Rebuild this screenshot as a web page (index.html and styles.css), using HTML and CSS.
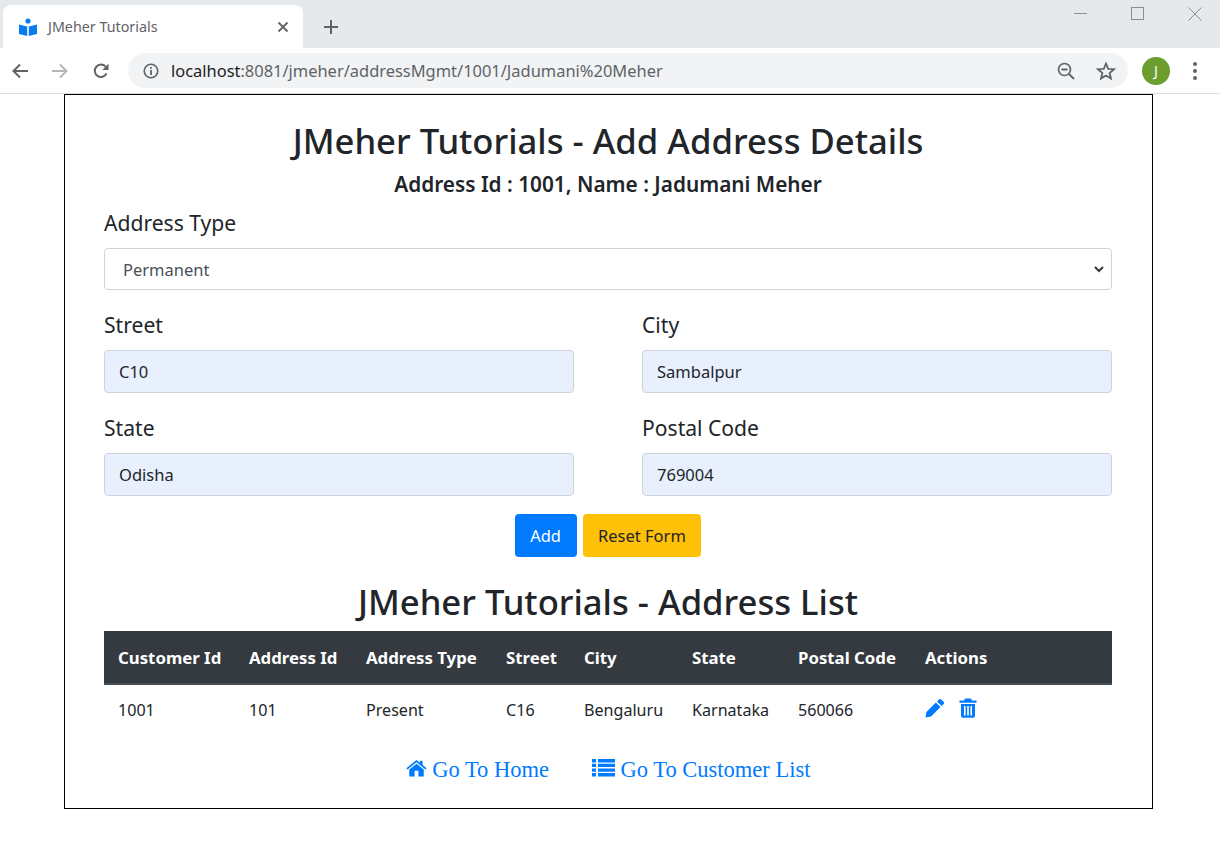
FILE: index.html
```html
<!DOCTYPE html>
<html lang="en">
<head>
  <meta charset="UTF-8" />
  <title>JMeher Tutorials</title>
  <link rel="stylesheet" href="styles.css">
</head>
<body>

  <header class="browser">
    <div class="tabStrip">
      <div class="tab">
        <svg class="favicon" viewBox="0 0 18 18" width="18" height="18">
          <circle cx="9" cy="3" r="2.6" fill="#0a7cf0" />
          <path d="M0 6.5 L8.2 8.6 V18 L0 16 Z M18 6.5 L9.8 8.6 V18 L18 16 Z" fill="#0a7cf0" />
        </svg>
        <span class="tabTitle">JMeher Tutorials</span>
        <svg class="tabClose" viewBox="0 0 12 12" width="12" height="12">
          <path d="M1.5 1.5 L10.5 10.5 M10.5 1.5 L1.5 10.5" stroke="#5f6368" stroke-width="1.8" />
        </svg>
      </div>
      <svg class="newTab" viewBox="0 0 16 16" width="16" height="16">
        <path d="M8 1 V15 M1 8 H15" stroke="#5f6368" stroke-width="2" />
      </svg>
      <div class="windowBtns">
        <svg viewBox="0 0 14 14" width="14" height="14"><path d="M0 6.5 H13" stroke="#8a8d91" stroke-width="1" /></svg>
        <svg viewBox="0 0 14 14" width="14" height="14"><rect x="0.5" y="0.5" width="12" height="12" fill="none" stroke="#8a8d91" /></svg>
        <svg viewBox="0 0 14 14" width="14" height="14"><path d="M0.5 0.5 L13.5 13.5 M13.5 0.5 L0.5 13.5" stroke="#8a8d91" stroke-width="1" /></svg>
      </div>
    </div>
    <div class="toolbar">
      <svg class="navIcon" viewBox="0 0 16 16" width="16" height="16">
        <path d="M16 8 H2 M8 1.5 L1.5 8 L8 14.5" fill="none" stroke="#5f6368" stroke-width="2" />
      </svg>
      <svg class="navIcon" viewBox="0 0 16 16" width="16" height="16">
        <path d="M0 8 H14 M8 1.5 L14.5 8 L8 14.5" fill="none" stroke="#b4b6b9" stroke-width="2" />
      </svg>
      <svg class="navIcon" viewBox="0 0 16 16" width="16" height="16">
        <path d="M13.6 10.4 A6.2 6.2 0 1 1 12.6 3.6" fill="none" stroke="#5f6368" stroke-width="2" />
        <path d="M15.5 0.8 V7 H9.3 Z" fill="#5f6368" />
      </svg>
      <div class="omnibox">
        <svg class="infoIcon" viewBox="0 0 16 16" width="16" height="16">
          <circle cx="8" cy="8" r="6.8" fill="none" stroke="#5f6368" stroke-width="1.6" />
          <path d="M8 7 V12 M8 4 V5.8" stroke="#5f6368" stroke-width="1.8" />
        </svg>
        <span class="url"><span class="urlHost">localhost</span>:8081/jmeher/addressMgmt/1001/Jadumani%20Meher</span>
        <svg class="zoomIcon" viewBox="0 0 18 18" width="18" height="18">
          <circle cx="7.5" cy="7.5" r="6" fill="none" stroke="#5f6368" stroke-width="1.7" />
          <path d="M4.5 7.5 H10.5 M12 12 L17 17" stroke="#5f6368" stroke-width="1.8" />
        </svg>
        <svg class="starIcon" viewBox="0 0 20 20" width="20" height="20">
          <path d="M10 2.5 L12.2 7.8 L18 8.2 L13.6 12 L15 17.6 L10 14.6 L5 17.6 L6.4 12 L2 8.2 L7.8 7.8 Z" fill="none" stroke="#5f6368" stroke-width="1.8" />
        </svg>
      </div>
      <div class="avatar">J</div>
      <div class="menuDots"><i></i><i></i><i></i></div>
    </div>
  </header>

  <main class="page">
    <h1>JMeher Tutorials - Add Address Details</h1>
    <h5>Address Id : 1001, Name : Jadumani Meher</h5>

    <form class="addressForm">
      <div class="field">
        <label for="addressType">Address Type</label>
        <div class="selectWrap">
          <select id="addressType">
            <option>Permanent</option>
            <option>Present</option>
          </select>
          <svg class="chevron" viewBox="0 0 10 8" width="10" height="8">
            <path d="M1 2 L5 6 L9 2" fill="none" stroke="#343a40" stroke-width="2" />
          </svg>
        </div>
      </div>
      <div class="fieldRow">
        <div class="field">
          <label for="street">Street</label>
          <input type="text" id="street" value="C10" />
        </div>
        <div class="field">
          <label for="city">City</label>
          <input type="text" id="city" value="Sambalpur" />
        </div>
      </div>
      <div class="fieldRow">
        <div class="field">
          <label for="state">State</label>
          <input type="text" id="state" value="Odisha" />
        </div>
        <div class="field">
          <label for="postalCode">Postal Code</label>
          <input type="text" id="postalCode" value="769004" />
        </div>
      </div>
      <div class="formButtons">
        <button type="button" class="btnAdd">Add</button>
        <button type="button" class="btnReset">Reset Form</button>
      </div>
    </form>

    <h2>JMeher Tutorials - Address List</h2>
    <table class="addressTable">
      <thead>
        <tr>
          <th class="colCustomer">Customer Id</th>
          <th class="colAddress">Address Id</th>
          <th class="colType">Address Type</th>
          <th class="colStreet">Street</th>
          <th class="colCity">City</th>
          <th class="colState">State</th>
          <th class="colPostal">Postal Code</th>
          <th>Actions</th>
        </tr>
      </thead>
      <tbody>
        <tr>
          <td>1001</td>
          <td>101</td>
          <td>Present</td>
          <td>C16</td>
          <td>Bengaluru</td>
          <td>Karnataka</td>
          <td>560066</td>
          <td class="actions">
            <a href="#" aria-label="Edit">
              <svg viewBox="0 0 20 20" width="20" height="20">
                <path d="M14.2 1.2 Q15 0.4 15.9 1.2 L18.8 4.1 Q19.6 5 18.8 5.8 L16.6 8 L12 3.4 Z M10.9 4.5 L15.5 9.1 L6 18.6 L0.6 19.6 L1.4 14 Z" fill="#007bff" />
              </svg>
            </a>
            <a href="#" aria-label="Delete">
              <svg viewBox="0 0 18 20" width="18" height="20">
                <path fill-rule="evenodd" d="M6 0.5 H12 L13 2.5 H17.5 V4.8 H0.5 V2.5 H5 Z M2 6 H16 V18 Q16 19.8 14.2 19.8 H3.8 Q2 19.8 2 18 Z M5 8 V17.5 H6.6 V8 Z M8.2 8 V17.5 H9.8 V8 Z M11.4 8 V17.5 H13 V8 Z" fill="#007bff" />
              </svg>
            </a>
          </td>
        </tr>
      </tbody>
    </table>

    <div class="pageLinks">
      <a href="#">
        <svg viewBox="0 0 22 18" width="21" height="18">
          <path d="M11 0.5 L14.5 3.4 V1.5 H17.3 V5.7 L21.6 9.2 L20.4 10.6 L11 2.9 L1.6 10.6 L0.4 9.2 Z M11 4.5 L18.6 10.7 V17.8 H13 V12 H9 V17.8 H3.4 V10.7 Z" fill="#007bff" />
        </svg>
        Go To Home
      </a>
      <a href="#">
        <svg viewBox="0 0 23 18" width="23" height="18">
          <path d="M0 0 H4 V3.4 H0 Z M6 0 H23 V3.4 H6 Z M0 4.7 H4 V8.1 H0 Z M6 4.7 H23 V8.1 H6 Z M0 9.4 H4 V12.8 H0 Z M6 9.4 H23 V12.8 H6 Z M0 14.1 H4 V17.5 H0 Z M6 14.1 H23 V17.5 H6 Z" fill="#007bff" />
        </svg>
        Go To Customer List
      </a>
    </div>
  </main>

</body>
</html>
```
FILE: styles.css
```css
* {
  box-sizing: border-box;
}

body {
  margin: 0;
  background: #fff;
  color: #212529;
  font-family: 'Noto Sans', 'Open Sans', sans-serif;
}

/* browser chrome */
.browser {
  height: 94px;
  border-bottom: 1px solid #dadce0;
}

.tabStrip {
  display: flex;
  align-items: flex-end;
  height: 48px;
  background: #e6e9ec;
}

.tab {
  display: flex;
  align-items: center;
  width: 300px;
  height: 43px;
  margin-left: 3px;
  padding: 0 14px 0 16px;
  background: #fff;
  border-radius: 8px 8px 0 0;
}

.favicon {
  flex: none;
}

.tabTitle {
  flex: 1;
  margin-left: 11px;
  font-size: 14.3px;
  color: #5f6368;
}

.newTab {
  align-self: center;
  margin: 5px 0 0 20px;
}

.windowBtns {
  display: flex;
  gap: 43px;
  align-self: flex-start;
  margin: 7px 18px 0 auto;
}

.toolbar {
  display: flex;
  align-items: center;
  height: 45px;
  padding-left: 12px;
}

.navIcon {
  flex: none;
  margin-right: 25px;
}

.navIcon:first-child {
  margin-right: 24px;
}

.navIcon:nth-child(3) {
  margin-right: 19px;
}

.omnibox {
  display: flex;
  align-items: center;
  width: 1000px;
  height: 35px;
  padding: 0 12px 0 15px;
  background: #f1f3f4;
  border-radius: 18px;
}

.infoIcon {
  flex: none;
}

.url {
  flex: 1;
  margin-left: 12px;
  font-size: 16.45px;
  color: #5f6368;
}

.urlHost {
  color: #202124;
}

.zoomIcon {
  margin-right: 21px;
}

.avatar {
  width: 28px;
  height: 28px;
  margin-left: 14px;
  background: #6b9e2f;
  border-radius: 50%;
  color: #fff;
  font-size: 14px;
  line-height: 28px;
  text-align: center;
}

.menuDots {
  display: flex;
  flex-direction: column;
  gap: 3px;
  margin-left: 23px;
}

.menuDots i {
  width: 4px;
  height: 4px;
  background: #5f6368;
  border-radius: 50%;
}

/* page */
.page {
  width: 1089px;
  height: 715px;
  margin-left: 64px;
  padding: 0 40px 0 39px;
  border: 1px solid #000;
}

h1, h2, h5 {
  margin: 0;
  font-weight: 500;
  text-align: center;
}

h1 {
  padding-top: 22px;
  font-size: 34.65px;
  line-height: 48px;
}

h5 {
  margin-top: 7px;
  font-size: 20.8px;
  font-weight: 600;
  line-height: 24px;
}

h2 {
  margin-top: 25px;
  font-size: 34.65px;
  line-height: 40px;
}

.addressForm {
  margin-top: 11px;
}

.field {
  margin-bottom: 19px;
}

label {
  display: block;
  margin-bottom: 9px;
  font-size: 21.1px;
  line-height: 32px;
}

.fieldRow {
  display: grid;
  grid-template-columns: 470px 470px;
  column-gap: 68px;
}

.selectWrap {
  position: relative;
}

select, input {
  display: block;
  width: 100%;
  border: 1px solid #ced4da;
  border-radius: 4px;
  font-family: inherit;
  font-size: 16.5px;
  outline: none;
}

select {
  height: 42px;
  padding: 0 18px;
  background: #fff;
  color: #495057;
  appearance: none;
}

.chevron {
  position: absolute;
  right: 8px;
  top: 17px;
}

input {
  height: 43px;
  padding: 0 14px;
  background: #e8f0fe;
  color: #212529;
}

.formButtons {
  display: flex;
  justify-content: center;
  gap: 6px;
  margin-top: -1px;
}

button {
  height: 43px;
  padding: 0 14.5px;
  border: 1px solid transparent;
  border-radius: 4px;
  font-family: inherit;
  font-size: 16.5px;
}

.btnAdd {
  background: #007bff;
  color: #fff;
}

.btnReset {
  background: #ffc107;
  color: #212529;
}

.addressTable {
  width: 100%;
  margin-top: 9px;
  border-collapse: collapse;
  table-layout: fixed;
  font-size: 16.1px;
}

.addressTable th {
  height: 53px;
  padding: 0 14px;
  background: #343a40;
  border-bottom: 2px solid #454d55;
  color: #fff;
  font-size: 16.8px;
  font-weight: 700;
  text-align: left;
  white-space: nowrap;
}

.addressTable td {
  height: 51px;
  padding: 0 14px;
}

.colCustomer { width: 131px; }
.colAddress { width: 117px; }
.colType { width: 140px; }
.colStreet { width: 78px; }
.colCity { width: 108px; }
.colState { width: 106px; }
.colPostal { width: 127px; }

.actions a {
  margin-right: 10px;
  text-decoration: none;
}

.actions svg {
  margin-bottom: 5px;
  vertical-align: middle;
}

.pageLinks {
  display: flex;
  justify-content: center;
  gap: 43px;
  margin-top: 17px;
  font-family: 'Liberation Serif', serif;
  font-size: 22.5px;
  line-height: 36px;
}

.pageLinks a {
  color: #007bff;
  text-decoration: none;
}
```
